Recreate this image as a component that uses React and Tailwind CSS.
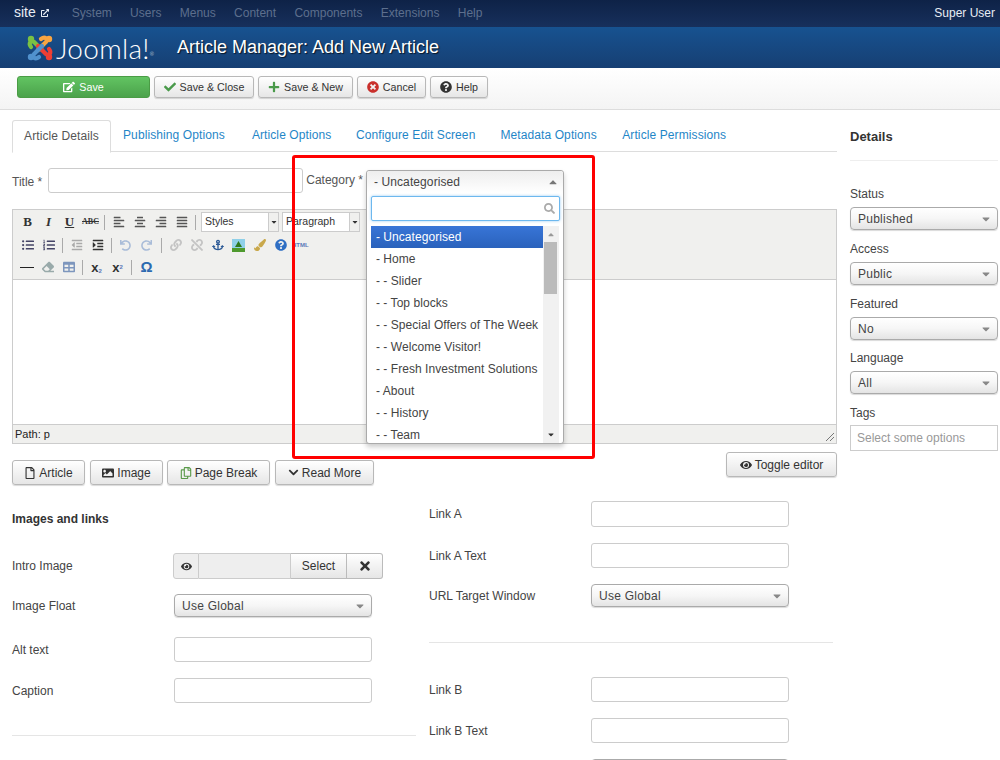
import { Fragment } from "react";
import {
  FaAlignCenter, FaAlignJustify, FaAlignLeft, FaAlignRight, FaAnchor, FaCheck, FaChevronDown, FaEdit, FaEraser,
  FaExternalLinkAlt, FaEye, FaImage, FaLink, FaListOl, FaListUl, FaOutdent, FaIndent, FaPaintBrush, FaPlus,
  FaQuestionCircle, FaRedo, FaRegCopy, FaRegFile, FaSearch, FaTable, FaTimes, FaTimesCircle,
  FaUndo, FaUnlink, FaCaretDown, FaCaretUp,
} from "react-icons/fa";

const categories = ["- Home", "- - Slider", "- - Top blocks", "- - Special Offers of The Week", "- - Welcome Visitor!", "- - Fresh Investment Solutions", "- About", "- - History", "- - Team"];

function Btn({ className = "", icon, children }) {
  return (
    <button className={`flex items-center justify-center gap-[3px] rounded-[3px] border border-[#b8b8b8] bg-gradient-to-b from-white to-[#e6e6e6] text-[#333] shadow-[0_1px_1px_rgba(0,0,0,0.15)] ${className}`}>
      {icon}
      {children}
    </button>
  );
}

function Select({ value, className = "" }) {
  return (
    <div className={`flex items-center justify-between rounded-[4px] border border-[#aaa] bg-gradient-to-b from-white via-[#f6f6f6] to-[#e4e4e4] pl-[7px] pr-[5px] text-[12px] tracking-[0.25px] text-[#444] shadow-[0_1px_1px_rgba(0,0,0,0.15)] ${className}`}>
      <span>{value}</span>
      <FaCaretDown className="text-[12px] text-[#888]" />
    </div>
  );
}

function TextInput({ className = "" }) {
  return <div className={`rounded-[3px] border border-[#ccc] bg-white ${className}`} />;
}

function Divider() {
  return <span className="mx-[3px] h-[15px] w-px bg-[#aaa]" />;
}

function Row({ label, children, className = "" }) {
  return (
    <div className={`flex items-center ${className}`}>
      <span className="w-[162px] text-[12px] text-[#444]">{label}</span>
      {children}
    </div>
  );
}

function SideField({ label, value, top }) {
  return (
    <div className={top}>
      <div className="mb-[6px] text-[12px] leading-[14px] text-[#444]">{label}</div>
      <Select value={value} className="h-[23px]" />
    </div>
  );
}

function ToolIcon({ children }) {
  return <span className="flex h-[18px] w-[21px] items-center justify-center text-[12px]">{children}</span>;
}

function Logo() {
  const arms = [
    ["#7ac143", 0],
    ["#f9a541", 90],
    ["#ee3f34", 180],
    ["#5091cd", 270],
  ];
  return (
    <svg className="shrink-0" width="28" height="28" viewBox="0 0 28 28" fill="none">
      {arms.map(([color, angle]) => (
        <g key={color} transform={`rotate(${angle} 14 14)`}>
          <path d="M5 13 C2 9 5 6 8 8 L16 16" stroke={color} strokeWidth="4.2" strokeLinecap="round" />
          <circle cx="5" cy="5" r="3.2" fill={color} />
        </g>
      ))}
    </svg>
  );
}

export default function App() {
  return (
    <div className="relative h-[760px] w-[1000px] overflow-hidden bg-white font-['Liberation_Sans',Arial,sans-serif] text-[12px] text-[#333]">
      {/* top nav */}
      <div className="flex h-[27px] items-center bg-gradient-to-b from-[#0e2247] to-[#17305c] pb-[2px] pl-[14px] pr-[5px] text-[12px]">
        <span className="flex items-center gap-[5px] text-[14px] text-[#e8edf5]">
          site <FaExternalLinkAlt className="text-[8px]" />
        </span>
        <nav className="ml-[23px] flex gap-[18.3px] text-[#5d6f8d]">
          <span>System</span>
          <span>Users</span>
          <span>Menus</span>
          <span>Content</span>
          <span>Components</span>
          <span>Extensions</span>
          <span>Help</span>
        </nav>
        <span className="ml-auto text-[#e8edf5]">Super User</span>
      </div>

      {/* header */}
      <div className="flex h-[41px] items-center bg-gradient-to-b from-[#175290] to-[#163f73] pl-[26px]">
        <Logo />
        <span className="ml-[2px] w-[121px] shrink-0 font-['Lato',sans-serif] text-[28px] font-light leading-none tracking-[0.3px] text-white">
          Joomla!<sup className="text-[5px]">®</sup>
        </span>
        <h1 className="text-[18px] font-normal text-white [text-shadow:1px_1px_1px_rgba(0,0,0,0.7)]">Article Manager: Add New Article</h1>
      </div>

      {/* toolbar */}
      <div className="flex h-[42px] items-start gap-1 border-b border-[#ddd] bg-gradient-to-b from-white to-[#f4f4f4] pl-[17px] pt-[8px] text-[10.7px]">
        <button className="flex h-[22px] w-[133px] items-center justify-center gap-[4px] rounded-[3px] border border-[#4a9c45] bg-gradient-to-b from-[#62c462] to-[#4ba24b] text-white">
          <FaEdit className="text-[12px]" /> Save
        </button>
        <Btn className="h-[22px] w-[100px]" icon={<FaCheck className="mr-[1px] text-[12px] text-[#4a9a4a]" />}>Save &amp; Close</Btn>
        <Btn className="h-[22px] w-[95px]" icon={<FaPlus className="mr-[1px] text-[12px] text-[#4a9a4a]" />}>Save &amp; New</Btn>
        <Btn className="h-[22px] w-[69px]" icon={<FaTimesCircle className="mr-[1px] text-[12px] text-[#c9302c]" />}>Cancel</Btn>
        <Btn className="h-[22px] w-[58px]" icon={<FaQuestionCircle className="mr-[1px] text-[12px] text-[#333]" />}>Help</Btn>
      </div>

      <div className="flex pl-[12px] pt-[10px]">
        {/* main column */}
        <main className="w-[825px]">
          {/* tabs */}
          <div className="flex h-[32px] border-b border-[#ddd] pb-[2px] text-[12px] tracking-[0.1px] text-[#1f86c7]">
            <span className="flex h-[33px] w-[99px] items-center justify-center rounded-t-[3px] border border-b-white border-[#ddd] bg-white pb-[2px] text-[#555]">Article Details</span>
            <span className="ml-[12px] flex items-center">Publishing Options</span>
            <span className="ml-[27px] flex items-center">Article Options</span>
            <span className="ml-[24.5px] flex items-center">Configure Edit Screen</span>
            <span className="ml-[25px] flex items-center">Metadata Options</span>
            <span className="ml-[25.5px] flex items-center">Article Permissions</span>
          </div>

          {/* title & category */}
          <div className="mt-[16px] flex h-[25px] items-start">
            <span className="mt-[5px] text-[12px] text-[#555]">Title *</span>
            <TextInput className="ml-[6px] h-[25px] w-[255px]" />
            <span className="ml-[3px] mt-[3px] text-[12px] text-[#555]">Category *</span>

            {/* open chosen select */}
            <div className="relative z-10 ml-[3px] mt-[2px] w-[198px]">
              <div className="absolute left-0 top-0 w-[198px] rounded-[3px] border border-[#aaa] bg-white shadow-[0_3px_5px_rgba(0,0,0,0.2)]">
                <div className="flex h-[22px] items-center justify-between rounded-t-[3px] bg-gradient-to-b from-[#eee] to-white pl-[7px] pr-[4px] text-[12px] tracking-[0.1px] text-[#444]">
                  <span>- Uncategorised</span>
                  <FaCaretUp className="text-[12px] text-[#777]" />
                </div>
                <div className="ml-[4px] mr-[3px] mt-[3px] flex h-[25px] items-center justify-end rounded-[2px] border border-[#6db8ee] bg-white pr-[4px] shadow-[0_0_3px_rgba(82,168,236,0.6)]">
                  <FaSearch className="text-[11px] text-[#aaa]" />
                </div>
                <div className="ml-[4px] mt-[5px] flex h-[217px]">
                  <ul className="w-[172px] text-[12px] tracking-[0.05px] text-[#444]">
                    <li className="flex h-[22px] items-center bg-gradient-to-b from-[#3875d7] to-[#2a62bc] pl-[5px] text-white">- Uncategorised</li>
                    {categories.map((c) => (
                      <li key={c} className="flex h-[22px] items-center pl-[5px]">{c}</li>
                    ))}
                  </ul>
                  <div className="flex w-[16px] flex-col items-center bg-[#f1f1f1]">
                    <FaCaretUp className="mt-[4px] h-[9px] text-[10px] text-[#999]" />
                    <div className="mt-[3px] h-[52px] w-[13px] bg-[#bbb]" />
                    <FaCaretDown className="mt-auto mb-[4px] h-[9px] text-[10px] text-[#333]" />
                  </div>
                </div>
              </div>
            </div>
          </div>

          {/* editor */}
          <div className="mt-[16px] border border-[#ccc]">
            <div className="flex h-[70px] flex-col gap-[2px] border-b border-[#ccc] bg-[#f0f0ee] pl-[4px] pt-[2px] text-[#333]">
              <div className="mb-[1px] flex h-[20px] items-center">
                <ToolIcon><span className="font-['Liberation_Serif',serif] text-[13px] font-bold">B</span></ToolIcon>
                <ToolIcon><span className="font-['Liberation_Serif',serif] text-[13px] font-bold italic">I</span></ToolIcon>
                <ToolIcon><span className="font-['Liberation_Serif',serif] text-[13px] font-bold underline">U</span></ToolIcon>
                <ToolIcon><span className="font-['Liberation_Serif',serif] text-[8px] font-bold line-through">ABC</span></ToolIcon>
                <Divider />
                <ToolIcon><FaAlignLeft className="text-[#555]" /></ToolIcon>
                <ToolIcon><FaAlignCenter className="text-[#555]" /></ToolIcon>
                <ToolIcon><FaAlignRight className="text-[#555]" /></ToolIcon>
                <ToolIcon><FaAlignJustify className="text-[#555]" /></ToolIcon>
                <Divider />
                {["Styles", "Paragraph"].map((s, i) => (
                  <Fragment key={s}>
                    <div className={`flex h-[20px] w-[68px] items-center border border-[#ccc] bg-white pl-[3px] text-[10.5px] ${i === 1 ? "ml-[3px]" : "ml-[2px]"}`}>{s}</div>
                    <div className="flex h-[20px] w-[10px] items-center justify-center border border-l-0 border-[#ccc] bg-[#f0f0ee]">
                      <FaCaretDown className="text-[8px]" />
                    </div>
                  </Fragment>
                ))}
              </div>
              <div className="flex h-[20px] items-center">
                <ToolIcon><FaListUl className="text-[#446]" /></ToolIcon>
                <ToolIcon><FaListOl className="text-[#446]" /></ToolIcon>
                <Divider />
                <ToolIcon><FaOutdent className="text-[#aaa]" /></ToolIcon>
                <ToolIcon><FaIndent /></ToolIcon>
                <Divider />
                <ToolIcon><FaUndo className="text-[11px] text-[#a9bcd8]" /></ToolIcon>
                <ToolIcon><FaRedo className="text-[11px] text-[#a9bcd8]" /></ToolIcon>
                <span className="ml-[1px] flex items-center"><Divider /></span>
                <ToolIcon><FaLink className="text-[#c4c4c4]" /></ToolIcon>
                <ToolIcon><FaUnlink className="text-[#c4c4c4]" /></ToolIcon>
                <ToolIcon><FaAnchor className="text-[#2c5a96]" /></ToolIcon>
                <ToolIcon>
                  <svg width="13" height="13" viewBox="0 0 13 13">
                    <rect width="13" height="13" fill="#8fd0e8" />
                    <rect y="9" width="13" height="4" fill="#4f9a2e" />
                    <path d="M6.5 2 L10 8 H3 Z" fill="#2d7a1f" />
                  </svg>
                </ToolIcon>
                <ToolIcon><FaPaintBrush className="text-[#c9a84b]" /></ToolIcon>
                <ToolIcon><FaQuestionCircle className="text-[#2f6fc4]" /></ToolIcon>
                <span className="ml-[1px] text-[6px] font-bold text-[#5b78b8]">HTML</span>
              </div>
              <div className="flex h-[20px] items-center">
                <span className="ml-[3px] mr-[3px] h-[1px] w-[14px] bg-[#222]" />
                <ToolIcon><FaEraser className="text-[#9aa]" /></ToolIcon>
                <ToolIcon><FaTable className="text-[#7d96bd]" /></ToolIcon>
                <Divider />
                <ToolIcon><span className="text-[13px] font-bold leading-none">x<sub className="text-[6px] text-[#5b78b8]">2</sub></span></ToolIcon>
                <ToolIcon><span className="text-[13px] font-bold leading-none">x<sup className="text-[6px] text-[#5b78b8]">2</sup></span></ToolIcon>
                <Divider />
                <span className="ml-[1px] flex"><ToolIcon><span className="text-[15px] font-bold text-[#2c6ab0]">Ω</span></ToolIcon></span>
              </div>
            </div>
            <div className="h-[144px] bg-white" />
            <div className="relative flex h-[19px] items-center border-t border-[#ccc] bg-[#f0f0ee] pl-[2px] text-[11px] text-[#222]">
              Path: p
              <svg className="absolute bottom-[1px] right-[1px]" width="10" height="10" viewBox="0 0 10 10" stroke="#777">
                <path d="M1 9 L9 1 M5 9 L9 5" />
              </svg>
            </div>
          </div>

          {/* editor buttons */}
          <div className="flex items-start">
            <div className="mt-[16px] flex gap-[5px]">
              <Btn className="h-[25px] w-[73px]" icon={<FaRegFile className="text-[12px]" />}>Article</Btn>
              <Btn className="h-[25px] w-[73px]" icon={<FaImage className="text-[12px]" />}>Image</Btn>
              <Btn className="-ml-px h-[25px] w-[103px]" icon={<FaRegCopy className="text-[12px] text-[#5a9a4a]" />}>Page Break</Btn>
              <Btn className="h-[25px] w-[99px]" icon={<FaChevronDown className="text-[11px]" />}>Read More</Btn>
            </div>
            <Btn className="ml-auto mt-[8px] h-[25px] w-[111px]" icon={<FaEye className="text-[12px]" />}>Toggle editor</Btn>
          </div>

          {/* lower form */}
          <div className="flex">
            <div className="w-[404px]">
              <h3 className="mt-[27px] text-[12px] font-bold leading-[14px] text-[#333]">Images and links</h3>
              <Row label="Intro Image" className="mt-[27px] h-[26px]">
                <div className="-ml-[1px] flex h-[26px] items-stretch">
                  <span className="flex w-[26px] items-center justify-center rounded-l-[3px] border border-[#ccc] bg-[#eee]"><FaEye className="text-[11px]" /></span>
                  <span className="w-[92px] border-y border-r border-[#ccc] bg-[#eee]" />
                  <span className="flex w-[56px] items-center justify-center border border-l-0 border-[#bbb] bg-gradient-to-b from-white to-[#e6e6e6] text-[12px]">Select</span>
                  <span className="flex w-[36px] items-center justify-center rounded-r-[3px] border border-l-0 border-[#bbb] bg-gradient-to-b from-white to-[#e6e6e6]"><FaTimes className="text-[14px]" /></span>
                </div>
              </Row>
              <Row label="Image Float" className="mt-[15px] h-[23px]">
                <Select value="Use Global" className="h-[23px] w-[198px]" />
              </Row>
              <Row label="Alt text" className="mt-[20px] h-[25px]">
                <TextInput className="h-[25px] w-[198px]" />
              </Row>
              <Row label="Caption" className="mt-[16px] h-[25px]">
                <TextInput className="h-[25px] w-[198px]" />
              </Row>
              <div className="mt-[32px] h-px bg-[#e5e5e5]" />
            </div>

            <div className="ml-[13px] w-[404px]">
              <Row label="Link A" className="mt-[16px] h-[26px]">
                <TextInput className="h-[26px] w-[198px]" />
              </Row>
              <Row label="Link A Text" className="mt-[16px] h-[25px]">
                <TextInput className="h-[25px] w-[198px]" />
              </Row>
              <Row label="URL Target Window" className="mt-[16px] h-[23px]">
                <Select value="Use Global" className="h-[23px] w-[198px]" />
              </Row>
              <div className="mt-[35px] h-px bg-[#e5e5e5]" />
              <Row label="Link B" className="mt-[34px] h-[25px]">
                <TextInput className="h-[25px] w-[198px]" />
              </Row>
              <Row label="Link B Text" className="mt-[16px] h-[25px]">
                <TextInput className="h-[25px] w-[198px]" />
              </Row>
              <Select value="" className="ml-[162px] mt-[16px] h-[23px] w-[198px]" />
            </div>
          </div>
        </main>

        {/* details sidebar */}
        <aside className="ml-[13px] w-[148px]">
          <h3 className="flex h-[33px] items-center text-[13px] font-bold text-[#333]">Details</h3>
          <div className="mt-[7px] h-px bg-[#eee]" />
          <SideField label="Status" value="Published" top="mt-[26px]" />
          <SideField label="Access" value="Public" top="mt-[12px]" />
          <SideField label="Featured" value="No" top="mt-[12px]" />
          <SideField label="Language" value="All" top="mt-[11px]" />
          <div className="mt-[12px]">
            <div className="mb-[5px] text-[12px] leading-[14px] text-[#444]">Tags</div>
            <div className="flex h-[26px] items-center border border-[#ccc] pl-[6px] text-[12px] text-[#999]">Select some options</div>
          </div>
        </aside>
      </div>

      {/* highlight rectangle drawn on the screenshot */}
      <div className="pointer-events-none absolute left-[292px] top-[155px] z-20 h-[304px] w-[303px] rounded-[3px] border-[3px] border-[#f00]" />
    </div>
  );
}
